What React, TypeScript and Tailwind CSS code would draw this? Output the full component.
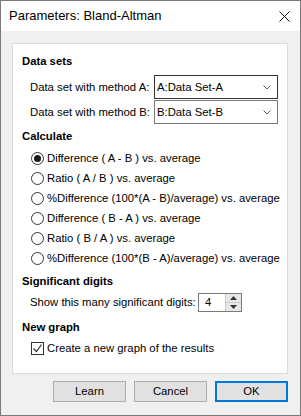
import React from 'react';

const font = { fontFamily: '"Liberation Sans", Arial, sans-serif' };

const Radio: React.FC<{ checked?: boolean; label: string }> = ({ checked, label }) => (
  <div className="flex items-center h-[20px] ml-[9px]">
    <span className="w-[13px] h-[13px] rounded-full border border-[#333333] bg-white flex items-center justify-center">
      {checked && <span className="w-[7px] h-[7px] rounded-full bg-[#1a1a1a]"></span>}
    </span>
    <span className="ml-[3px] text-[11.3px] text-black">{label}</span>
  </div>
);

const Combo: React.FC<{ value: string; focused?: boolean }> = ({ value, focused }) => (
  <div
    className={`w-[124px] h-[24px] bg-white border flex items-center justify-between pl-[2px] pr-[6px] ${
      focused ? 'border-[#333333]' : 'border-[#7a7a7a]'
    }`}
  >
    <span className="text-[11.3px] text-black">{value}</span>
    <svg width="8" height="5" viewBox="0 0 8 5">
      <polyline points="0.5,0.5 4,4 7.5,0.5" fill="none" stroke="#606060" strokeWidth="1" />
    </svg>
  </div>
);

const Button: React.FC<{ label: string; primary?: boolean }> = ({ label, primary }) => (
  <button
    className={`w-[73px] h-[21px] bg-[#e1e1e1] text-[11.3px] text-black flex items-center justify-center ${
      primary ? 'border-2 border-[#0078d7]' : 'border border-[#adadad]'
    }`}
  >
    {label}
  </button>
);

const App: React.FC = () => {
  return (
    <div className="w-[301px] h-[416px] border border-[#7a7a7a] flex flex-col bg-[#f0f0f0]" style={font}>
      {/* Title bar */}
      <div className="h-[30px] bg-white flex items-center justify-between pl-2 pr-[10px] shrink-0">
        <span className="text-[13px] text-black">Parameters: Bland-Altman</span>
        <svg width="11" height="11" viewBox="0 0 11 11">
          <path d="M0.5 0.5 L10.5 10.5 M10.5 0.5 L0.5 10.5" stroke="#111" strokeWidth="1" />
        </svg>
      </div>

      {/* Body */}
      <div className="flex-1 pl-[11px] pr-[12px] pt-[12px]">
        <div className="h-[331px] bg-white border border-[#dcdcdc] pl-[9px] pt-[9px] flex flex-col">
          <div className="text-[11.3px] font-bold leading-[16px] text-black">Data sets</div>
          <div className="flex items-center mt-[6px]">
            <span className="ml-[8px] w-[124px] text-[11.3px] text-black">Data set with method A:</span>
            <Combo value="A:Data Set-A" focused />
          </div>
          <div className="flex items-center mt-[1px]">
            <span className="ml-[8px] w-[124px] text-[11.3px] text-black">Data set with method B:</span>
            <Combo value="B:Data Set-B" />
          </div>

          <div className="text-[11.3px] font-bold leading-[16px] text-black mt-[4px]">Calculate</div>
          <div className="flex flex-col mt-[4px]">
            <Radio checked label="Difference ( A - B ) vs. average" />
            <Radio label="Ratio ( A / B ) vs. average" />
            <Radio label="%Difference (100*(A - B)/average) vs. average" />
            <Radio label="Difference ( B - A ) vs. average" />
            <Radio label="Ratio ( B / A ) vs. average" />
            <Radio label="%Difference (100*(B - A)/average) vs. average" />
          </div>

          <div className="text-[11.3px] font-bold leading-[16px] text-black mt-[5px]">Significant digits</div>
          <div className="flex items-center h-[20px] mt-[3px]">
            <span className="ml-[8px] w-[168px] text-[11.3px] text-black">Show this many significant digits:</span>
            <div className="w-[44px] h-[19px] border border-[#7a7a7a] bg-white flex">
              <span className="flex-1 text-[11.3px] text-black pl-[6px] leading-[17px]">4</span>
              <div className="w-[16px] flex flex-col border-l border-[#c8c8c8]">
                <div className="flex-1 bg-[#e8e8e8] flex items-center justify-center border-b border-[#c8c8c8]">
                  <svg width="7" height="4" viewBox="0 0 7 4">
                    <polygon points="3.5,0 7,4 0,4" fill="#333" />
                  </svg>
                </div>
                <div className="flex-1 bg-[#e8e8e8] flex items-center justify-center">
                  <svg width="7" height="4" viewBox="0 0 7 4">
                    <polygon points="0,0 7,0 3.5,4" fill="#333" />
                  </svg>
                </div>
              </div>
            </div>
          </div>

          <div className="text-[11.3px] font-bold leading-[16px] text-black mt-[7px]">New graph</div>
          <div className="flex items-center h-[20px] mt-[3px] ml-[9px]">
            <span className="w-[13px] h-[13px] border border-[#333333] bg-white flex items-center justify-center">
              <svg width="11" height="11" viewBox="0 0 11 11">
                <polyline points="1.5,5.5 4.5,8.5 9.5,1.5" fill="none" stroke="#333" strokeWidth="1.2" />
              </svg>
            </span>
            <span className="ml-[3px] text-[11.3px] text-black">Create a new graph of the results</span>
          </div>
        </div>

        <div className="flex justify-end gap-[8px] mt-[7px]">
          <Button label="Learn" />
          <Button label="Cancel" />
          <Button label="OK" primary />
        </div>
      </div>
    </div>
  );
};

export default App;
